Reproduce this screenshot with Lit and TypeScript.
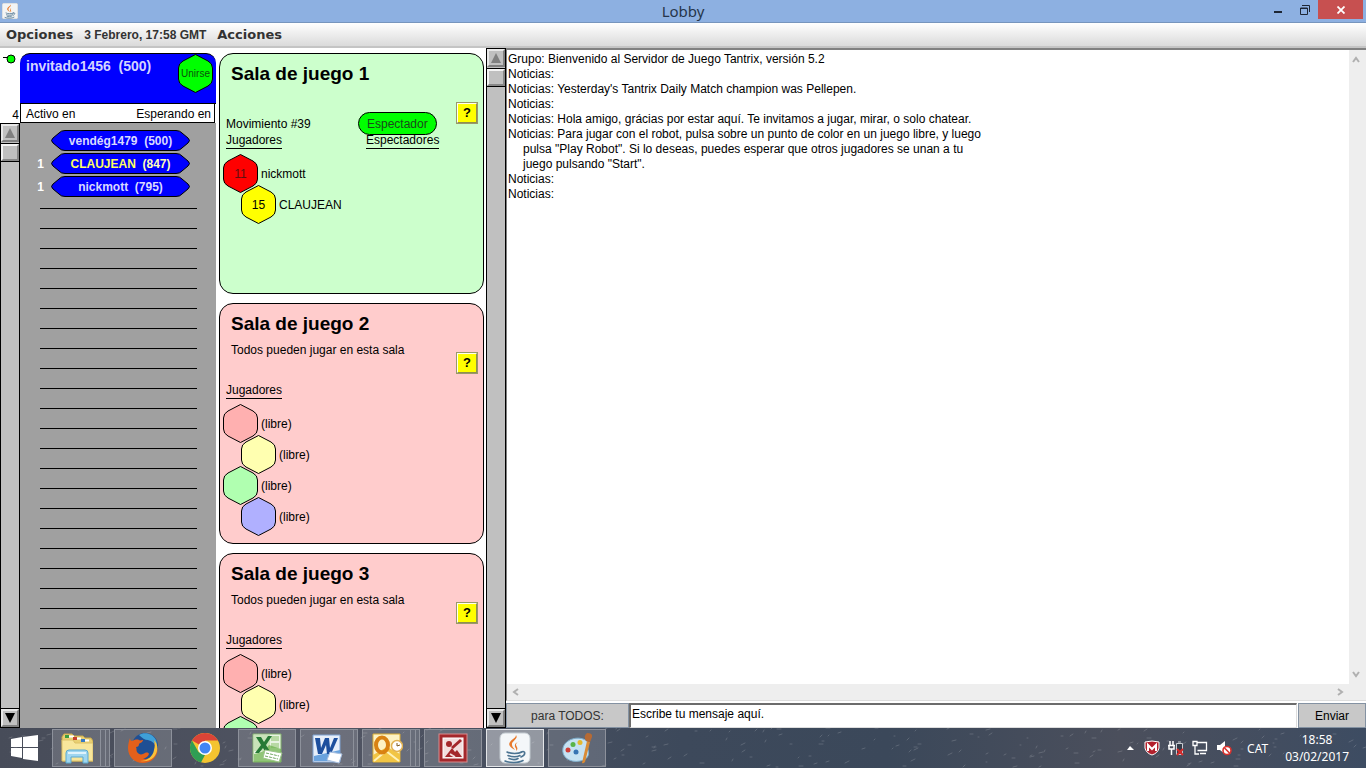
import { LitElement, html, css, svg, nothing } from "lit";
import { customElement } from "lit/decorators.js";
import { classMap } from "lit/directives/class-map.js";

type Seat = { color: string; label: string; score?: string };
type Room = { title: string; note?: string; move?: string; active?: boolean; seats: Seat[] };

const FREE: Seat[] = [
  { color: "#ffb0b0", label: "(libre)" },
  { color: "#ffffb0", label: "(libre)" },
  { color: "#b0ffb0", label: "(libre)" },
  { color: "#b0b0ff", label: "(libre)" },
];

const ROOMS: Room[] = [
  {
    title: "Sala de juego 1",
    move: "Movimiento #39",
    active: true,
    seats: [
      { color: "#ff0000", label: "nickmott", score: "11" },
      { color: "#ffff00", label: "CLAUJEAN", score: "15" },
    ],
  },
  { title: "Sala de juego 2", note: "Todos pueden jugar en esta sala", seats: FREE },
  {
    title: "Sala de juego 3",
    note: "Todos pueden jugar en esta sala",
    seats: [FREE[0], FREE[1], { color: "#b0ffb0", label: "" }],
  },
];

const PLAYERS = [
  { room: "", name: "vendég1479", rating: "(500)", friend: false },
  { room: "1", name: "CLAUJEAN", rating: "(847)", friend: true },
  { room: "1", name: "nickmott", rating: "(795)", friend: false },
];

const LOG = [
  ["Grupo: Bienvenido al Servidor de Juego Tantrix, versión 5.2"],
  ["Noticias:"],
  ["Noticias: Yesterday's Tantrix Daily Match champion was Pellepen."],
  ["Noticias:"],
  ["Noticias: Hola amigo, grácias por estar aquí. Te invitamos a jugar, mirar, o solo chatear."],
  [
    "Noticias: Para jugar con el robot, pulsa sobre un punto de color en un juego libre, y luego",
    "pulsa \"Play Robot\". Si lo deseas, puedes esperar que otros jugadores se unan a tu",
    "juego pulsando \"Start\".",
  ],
  ["Noticias:"],
  ["Noticias:"],
];

const hexagon = (fill: string) => html`<svg class="hex-shape" width="35" height="39" viewBox="0 0 35 39" aria-hidden="true">
  <path d="M17.500 .5 L30 7 Q34.500 9.500 34.500 14 V25 Q34.500 29.500 30 32 L17.500 38.500 L5 32 Q.5 29.500 .5 25 V14 Q.5 9.500 5 7 Z" fill=${fill} stroke="#000" />
</svg>`;

const javaCup = svg`
  <path d="M17 3c3 4-5 6-4 10 0 2 2 3 3 5-5-3-7-5-5-8 2-3 6-4 6-7z" fill="#e8792b"/>
  <path d="M21 9c-4 2-5 3-3 6 1 2 0 3-1 4 1-3-2-4-1-6 0-2 3-3 5-4z" fill="#e8792b"/>
  <path d="M8 20c4 2 11 2 15 0M9 23.500c4 1.500 9 1.500 12 0M10 26.500c3 1.200 7 1.200 9 0M6 29c4 2 14 2 18-.5M22 20c5-2 5 3 0 5" fill="none" stroke="#4b7391" stroke-width="1.600" stroke-linecap="round"/>`;

const ICONS = {
  explorer: svg`
    <path d="M1 5l2-3h8l2 2h9l2 2h6l2 3v20H2z" fill="#e9cf72" stroke="#c9a94b"/>
    <path d="M7 3.500h6v2H7zM15 5.500h5v2h-5zM23 7.500h5v2h-5z" fill="#fff"/>
    <path d="M4 3h4v3H4z" fill="#3b9c3f"/><path d="M12 5h4v3h-4z" fill="#c8402e"/><path d="M20 7h4v3h-4z" fill="#3579c4"/>
    <path d="M1 8h11l2 3h18v18H1z" fill="#f8e69b" stroke="#dcc067"/>
    <path d="M5 31V21q0-3 3-3h16q3 0 3 3v10h-5v-6H10v6z" fill="#9fd6f0" stroke="#5ba9d0"/>
    <path d="M7 21h18" stroke="#dff3fc" stroke-width="2"/>`,
  firefox: svg`
    <circle cx="18" cy="14" r="13" fill="#1f4f94"/>
    <path d="M12 3c6-4 14-1 17 5 1 3 1 5 0 7-2-5-5-6-8-7-3 0-6-2-9-5z" fill="#3fa0d8"/>
    <path d="M3 6c0 2 1 3 2 3 2-1 5-2 7-1 1 1 3 0 4 0 0 2-3 3-4 4 0 2-1 3-3 3 1 2 0 3 1 5 2 3 5 3 8 1 2-1 4 0 4 1-1 3-4 4-6 5 6 1 11-3 12-10 1-2 0-4-1-6 3 2 4 6 3 10-2 6-7 10-14 10C8 31 1 25 1 16c0-4 1-7 2-10z" fill="#e4601b"/>
    <path d="M27 8c5 5 4 12 0 17-4 4-9 5-14 4 8 0 13-5 14-11 1-4 1-7 0-10z" fill="#f9c23a"/>`,
  chrome: svg`
    <circle cx="16" cy="16" r="15" fill="#f4c430"/>
    <path d="M16 16L3 8.500A15 15 0 0 1 29 8.500H16z" fill="#dc4437"/>
    <path d="M3 8.500L9.500 20 16 23l-4 7.500A15 15 0 0 1 3 8.500z" fill="#2f9e54"/>
    <circle cx="16" cy="16" r="7" fill="#fff"/><circle cx="16" cy="16" r="5.500" fill="#4285f4"/>`,
  excel: svg`
    <path d="M2 2h28v28H2z" fill="#e8f3e2" stroke="#83b36c"/>
    <path d="M3 3h16v16H3z" fill="#c9e3b9"/><path d="M20 4h8v5h-8zM20 11h8v5h-8z" fill="#b8d9a4"/>
    <path d="M3 22c10-2 10-3 15-9l12 4v13H3z" fill="#6bb04a" opacity=".7"/>
    <path d="M5 5h5l3 5 4-6h4l-6 9 5 8h-5l-3-5-4 5H4l6-8z" fill="#267a36"/>
    <path d="M14 18l17 3-3 9-16-4z" fill="#fff" stroke="#9cc48a"/><path d="M15 21l13 3M14 24l13 3" stroke="#72a862" stroke-dasharray="3 1"/>`,
  word: svg`
    <path d="M2 3h27v27H2z" fill="#e7effa" stroke="#7fa3d3"/><path d="M3 24l26-6v11H3z" fill="#6aa3de"/>
    <path d="M4 6h5l1 10 4-10h4l1 10 4-10h4l-7 16h-4l-1-9-4 9H7z" fill="#1d4f9e"/>
    <path d="M19 20l12 2-3 9-12-3z" fill="#fff" stroke="#a8bfdf"/>`,
  outlook: svg`
    <path d="M2 2h27v28H2z" fill="#fdf2c4" stroke="#dcae35"/><path d="M2 23l14-8 13 7v8H2z" fill="#f2c544"/>
    <path d="M3 29l12-10 13 10" fill="none" stroke="#fff2b8" stroke-width="2"/>
    <ellipse cx="11" cy="13" rx="6" ry="7.500" fill="none" stroke="#d98212" stroke-width="4"/>
    <circle cx="26" cy="14" r="5.500" fill="#fff" stroke="#e2b252" stroke-width="1.500"/><path d="M26 11v3l3-1" fill="none" stroke="#805b1c"/>`,
  viewer: svg`
    <rect x="2" y="2" width="28" height="28" fill="#a4272b" stroke="#d98b8d"/>
    <rect x="6" y="6" width="20" height="20" fill="#f3dede" stroke="#fff"/>
    <path d="M15 16l9-8" stroke="#a4272b" stroke-width="3"/><circle cx="12" cy="12" r="3" fill="#a4272b"/><path d="M8 25l7-9 3 4 2-2 5 7z" fill="#a4272b"/><path d="M13 22l5 3" stroke="#f3dede" stroke-width="2"/>`,
  java: svg`<rect x="1" y="1" width="30" height="30" rx="5" fill="#f4f7f9" stroke="#c4ccd2"/>${javaCup}`,
  paint: svg`
    <path d="M2 16C4 7 18 3 26 9c3 3 0 6 1 9 2 5-1 10-8 11C9 31 0 25 2 16z" fill="#c6e2f2" stroke="#7fb1d0"/>
    <circle cx="7" cy="18" r="2.500" fill="#cf3f38"/><circle cx="12" cy="12.500" r="2.500" fill="#59b447"/><circle cx="19" cy="10.500" r="2.500" fill="#e3b930"/><circle cx="15" cy="20" r="2.500" fill="#3674b3"/>
    <path d="M21 31L26 9l3 1-5 20q-2 2-3 1z" fill="#d98b35"/><path d="M25 9q-3-5 1-8 6 0 5 4-1 3-2 5z" fill="#b56a35"/>`,
};

const TASKS: { id: keyof typeof ICONS; name: string; kind: string }[] = [
  { id: "explorer", name: "Explorador", kind: "stack two" },
  { id: "firefox", name: "Firefox", kind: "" },
  { id: "chrome", name: "Chrome", kind: "idle" },
  { id: "excel", name: "Excel", kind: "" },
  { id: "word", name: "Word", kind: "stack" },
  { id: "outlook", name: "Outlook", kind: "stack two" },
  { id: "viewer", name: "Visor", kind: "" },
  { id: "java", name: "Java", kind: "current" },
  { id: "paint", name: "Paint", kind: "" },
];

const specks = Array.from({ length: 240 }, (_, i) => {
  const x = (i * 379 + ((i * i * 17) % 211)) % 1366;
  const y = (i * 23 + ((i * i * 7) % 31)) % 40;
  return `M${x} ${y}l${(i % 4) + 1} ${-((i * 5) % 3)}`;
}).join("");

const base = css`
  * { box-sizing: border-box; }
  button { font: inherit; color: inherit; background: none; border: 0; padding: 0; margin: 0; }
  svg { display: block; }
`;

@customElement("awt-scrollbar")
export class AwtScrollbar extends LitElement {
  static styles = [base, css`
    :host { box-sizing: border-box; display: flex; flex-direction: column; width: 20px; background: #c0c0c0; border: 1px solid #000; }
    .arrow, .thumb { display: grid; place-items: center; flex: none; background: #c0c0c0; border: 2px solid; border-color: #e8e8e8 #808080 #808080 #e8e8e8; }
    .arrow { height: 18px; }
    .thumb { height: 17px; margin-top: 2px; outline: 1px solid #000; border-color: #f4f4f4 #888 #888 #f4f4f4; }
    .track { flex: 1; border-bottom: 1px solid #000; }
  `];
  render() {
    return html`
      <button class="arrow" aria-label="Subir"><svg width="10" height="10"><path d="M5 0l5 10H0z" fill="#808080" /></svg></button>
      <div class="thumb"></div>
      <div class="track"></div>
      <button class="arrow" aria-label="Bajar"><svg width="10" height="10"><path d="M0 0h10L5 10z" fill="#000" /></svg></button>`;
  }
}

@customElement("game-room")
export class GameRoom extends LitElement {
  static properties = { room: { attribute: false } };
  declare room: Room;
  static styles = [base, css`
    :host { display: block; flex: none; }
    .card { height: 241px; border: 1px solid #000; border-radius: 14px; background: #ffcccc; padding: 10px 5px 0 3px; }
    .card.active { background: #ccffcc; }
    .title { margin: 0 0 0 8px; font-size: 19px; line-height: 20px; font-weight: bold; }
    .info { display: grid; grid-template-columns: 1fr 22px; }
    .fields { display: grid; grid-template-columns: 140px 1fr; grid-template-rows: 31px 18px 16px; align-items: center; margin-left: 3px; line-height: 14px; }
    .note { grid-column: 1 / -1; margin-left: 5px; }
    .under { justify-self: start; border-bottom: 1px solid #000; line-height: 15px; grid-row: 3; }
    .watch { justify-self: start; height: 23px; margin: -3px 0 -2px -8px; padding: 0 8px; border: 1px solid #000; border-radius: 12px; background: #00ff00; color: #1b4a1b; }
    .help { width: 22px; height: 22px; margin-top: 18px; background: #ffff00; border: 2px solid; border-color: #fffff0 #908f50 #908f50 #fffff0; outline: 1px solid #99996a; outline-offset: -1px; font-weight: bold; font-size: 13px; line-height: 16px; }
    .seats { list-style: none; margin: 5px 0 0; padding: 0; }
    .seat { display: flex; align-items: flex-start; height: 31px; gap: 3px; }
    .seat:nth-child(even) { padding-left: 18px; }
    .hex { display: grid; place-items: center; width: 35px; height: 39px; }
    .hex > * { grid-area: 1 / 1; }
    .name { line-height: 40px; }
    .dim { color: #5c1010; }
  `];
  render() {
    const r = this.room;
    return html`<section class=${classMap({ card: true, active: !!r.active })}>
      <h2 class="title">${r.title}</h2>
      <div class="info">
        <div class="fields">
          <div class="note">${r.note ?? nothing}</div>
          ${r.move ? html`<div>${r.move}</div><button class="watch">Espectador</button>` : nothing}
          <div class="under">Jugadores</div>
          ${r.move ? html`<div class="under">Espectadores</div>` : nothing}
        </div>
        <button class="help" aria-label="Ayuda">?</button>
      </div>
      <ul class="seats">
        ${r.seats.map((s) => html`<li class="seat">
          <button class="hex" aria-label="Sentarse">${hexagon(s.color)}${s.score ? html`<span class=${classMap({ dim: s.score === "11" })}>${s.score}</span>` : nothing}</button>
          ${s.label ? html`<span class="name">${s.label}</span>` : nothing}
        </li>`)}
      </ul>
    </section>`;
  }
}

@customElement("app-root")
export class AppRoot extends LitElement {
  static styles = [base, css`
    :host { box-sizing: border-box; display: flex; flex-direction: column; height: 100vh; padding-bottom: 4px; background: #fff; color: #000; overflow: hidden; font: 12px "Liberation Sans", Arial, sans-serif; }
    .titlebar { display: grid; grid-template-columns: 1fr auto 1fr; align-items: start; flex: none; height: 23px; background: #8db0e1; border-bottom: 1px solid #7795bd; }
    .app-icon { margin: 3px 0 0 2px; }
    .caption { margin: 0; font: 15px/23px "Noto Sans", sans-serif; color: #26354a; }
    .window-buttons { display: flex; justify-content: flex-end; padding-right: 3px; }
    .win { display: grid; place-items: center; width: 27px; height: 19px; }
    .win.close { width: 45px; background: #c75050; }
    .menubar { display: flex; align-items: center; flex: none; height: 25px; padding: 0 6px; gap: 11px; background: linear-gradient(#fff, #dadada); border-bottom: 2px solid #c4c4c4; color: #333; font-weight: bold; }
    .menu { font: bold 13px "DejaVu Sans", sans-serif; }
    .main { display: grid; grid-template-columns: 20px 196px 270px 20px 1fr; flex: 1; min-height: 0; }
    .rail { display: flex; flex-direction: column; min-height: 0; }
    .status { height: 75px; display: flex; flex-direction: column; justify-content: space-between; align-items: flex-end; flex: none; padding: 6px 1px 1px 0; }
    .dot { margin-right: 3px; }
    .rail awt-scrollbar { flex: 1; }
    .people { display: flex; flex-direction: column; min-height: 0; padding-top: 5px; }
    .me { display: flex; justify-content: space-between; flex: none; height: 51px; padding: 0 3px 0 6px; background: #0000ff; border: 1px solid #000; border-width: 1px 0; border-radius: 10px 10px 0 0; color: #d4d4ff; }
    .me-name { font-size: 14px; line-height: 25px; font-weight: bold; white-space: pre; }
    .join { display: grid; place-items: center; width: 35px; height: 39px; font-size: 10px; color: #0b510b; }
    .join > * { grid-area: 1 / 1; }
    .heads { display: flex; justify-content: space-between; align-items: flex-end; flex: none; height: 19px; margin-right: 1px; padding: 0 3px 0 5px; border: 1px solid #000; border-top: 0; line-height: 15px; }
    .list { flex: 1; min-height: 0; overflow: hidden; background: #a0a0a0; padding-top: 6px; }
    .player { display: grid; grid-template-columns: 24px 139px; justify-content: start; gap: 7px; align-items: center; height: 23px; color: #fff; font-weight: bold; }
    .at { text-align: right; }
    .pill { display: grid; place-items: center; height: 21px; color: #d9d9ff; white-space: pre; }
    .pill > * { grid-area: 1 / 1; }
    .pill.friend { color: #ffff60; }
    .pill.friend .rating { color: #ffffb8; }
    .empty { height: 20px; margin: 0 19px 0 20px; border-bottom: 1px solid #000; }
    .empty.first { height: 11px; }
    .rooms { display: flex; flex-direction: column; gap: 9px; padding: 5px 2px 0 3px; min-height: 0; overflow: hidden; }
    .chat { display: flex; flex-direction: column; min-width: 0; min-height: 0; background: #eee; }
    .log-frame { display: grid; grid-template-columns: 1fr 17px; grid-template-rows: 1fr 16px; flex: 1; min-height: 0; border: 1px solid #808080; border-width: 2px 0 1px 1px; border-bottom-color: #ddd; }
    .log { background: #fff; padding: 2px 1px; line-height: 15px; overflow: hidden; }
    .entry { margin: 0; }
    .cont { padding-left: 15px; }
    .vbar { display: flex; flex-direction: column; justify-content: space-between; align-items: center; padding: 6px 3px 6px 0; }
    .hbar { display: flex; justify-content: space-between; align-items: center; padding: 0 5px; }
    .send-row { display: grid; grid-template-columns: 123px 1fr 68px; flex: none; height: 27px; padding-top: 2px; background: #fff; }
    .flat { background: #c8c8c8; border: 1px solid #8492a2; color: #333; }
    .message { min-width: 0; margin-right: 1px; padding: 0 1px 4px; border: 1px solid #ddd; border-width: 2px 1px 1px 2px; border-color: #6c6c6c #ddd #ddd #6c6c6c; border-radius: 0; font: inherit; color: #000; background: #fff; outline: 0; }
    .send { color: #000; }
    .taskbar { display: grid; grid-template-columns: 1fr; flex: none; height: 40px; background: linear-gradient(90deg, #474c59, #505462 25%, #3d495b 50%, #3b485a 65%, #4b4f5c 82%, #3d4c62); overflow: hidden; }
    .taskbar > * { grid-area: 1 / 1; }
    .specks { width: 100%; height: 40px; opacity: .16; }
    .bar-content { display: flex; align-items: stretch; position: relative; }
    .start { width: 48px; display: grid; place-items: center; margin-right: 4px; }
    .tasks { display: flex; gap: 4px; padding: 1px 0; }
    .task { position: relative; display: grid; place-items: center; width: 58px; border: 1px solid #8d919b; background: rgba(255, 255, 255, .16); }
    .task.idle { border-color: transparent; background: none; }
    .task.current { border-color: #e3e5e8; background: rgba(255, 255, 255, .42); }
    .task.stack { padding-right: 4px; }
    .task.stack::after { content: ""; position: absolute; top: -1px; bottom: -1px; right: 3px; border-left: 1px solid #8d919b; }
    .task.two { padding-right: 8px; }
    .task.two::after { width: 4px; border-right: 1px solid #8d919b; }
    .tray { display: flex; align-items: center; margin-left: auto; color: #fff; font: 12px/17px "Noto Sans", sans-serif; padding-right: 17px; }
    .tray-icons { display: flex; align-items: center; gap: 8px; margin-right: 15px; }
    .clock { text-align: center; margin-left: 17px; }
  `];

  chevron(d: string) {
    return html`<svg width="8" height="8" viewBox="0 0 8 8" aria-hidden="true"><path d=${d} fill="none" stroke="#b0b0b0" stroke-width="2" /></svg>`;
  }

  render() {
    return html`
      <header class="titlebar">
        <svg class="app-icon" width="16" height="16" viewBox="0 0 32 32" aria-hidden="true"><rect width="32" height="32" rx="3" fill="#f3f4f4" stroke="#9aa5b2" />${javaCup}</svg>
        <h1 class="caption">Lobby</h1>
        <div class="window-buttons">
          <button class="win" aria-label="Minimizar"><svg width="8" height="8"><path d="M0 5h8v2H0z" fill="#1d2634" /></svg></button>
          <button class="win" aria-label="Restaurar"><svg width="10" height="10"><path d="M2 .5H9.500V7M.5 3h7v6.500H.5zM.5 3.500h7" fill="none" stroke="#1d2634" /></svg></button>
          <button class="win close" aria-label="Cerrar"><svg width="8" height="8"><path d="M.5.5l7 7M7.500.5l-7 7" stroke="#fff" stroke-width="1.800" /></svg></button>
        </div>
      </header>
      <nav class="menubar">
        <button class="menu">Opciones</button><span>3 Febrero, 17:58 GMT</span><button class="menu">Acciones</button>
      </nav>
      <main class="main">
        <div class="rail">
          <div class="status">
            <svg class="dot" width="13" height="10" viewBox="0 0 13 10" aria-hidden="true"><path d="M0 3.500h5" stroke="#000" /><circle cx="8" cy="5" r="4" fill="#00ff00" stroke="#000" /></svg>
            <span>4</span>
          </div>
          <awt-scrollbar></awt-scrollbar>
        </div>
        <div class="people">
          <div class="me">
            <span class="me-name">invitado1456  (500)</span>
            <button class="join">${hexagon("#00ff00")}<span>Unirse</span></button>
          </div>
          <div class="heads"><span>Activo en</span><span>Esperando en</span></div>
          <div class="list">
            ${PLAYERS.map((p) => html`<div class="player">
              <span class="at">${p.room}</span>
              <button class=${classMap({ pill: true, friend: p.friend })}>
                <svg width="139" height="21" viewBox="0 0 139 21" aria-hidden="true"><path d="M14 .5H125Q129 .5 131 3L137 8Q140 10.500 137 13L131 18Q129 20.500 125 20.500H14Q10 20.500 8 18L2 13Q-1 10.500 2 8L8 3Q10 .5 14 .5Z" fill="#0000ff" stroke="#000" /></svg>
                <span>${p.name}  <span class="rating">${p.rating}</span></span>
              </button>
            </div>`)}
            <div class="empty first"></div>
            ${Array.from({ length: 25 }, () => html`<div class="empty"></div>`)}
          </div>
        </div>
        <div class="rooms">${ROOMS.map((r) => html`<game-room .room=${r}></game-room>`)}</div>
        <awt-scrollbar></awt-scrollbar>
        <div class="chat">
          <div class="log-frame">
            <div class="log" role="log">
              ${LOG.map((lines) => html`<p class="entry">${lines.map((l, i) => i > 0 ? html`<br /><span class="cont">${l}</span>` : l)}</p>`)}
            </div>
            <div class="vbar">${this.chevron("M1 6l3-4 3 4")}${this.chevron("M1 2l3 4 3-4")}</div>
            <div class="hbar">${this.chevron("M6 1L2 4l4 3")}${this.chevron("M2 1l4 3-4 3")}</div>
          </div>
          <div class="send-row">
            <button class="flat">para TODOS:</button>
            <input class="message" aria-label="Mensaje" value="Escribe tu mensaje aquí." />
            <button class="flat send">Enviar</button>
          </div>
        </div>
      </main>
      <footer class="taskbar">
        <svg class="specks" viewBox="0 0 1366 40" preserveAspectRatio="xMidYMid slice" aria-hidden="true"><path d=${specks} stroke="#fff" stroke-linecap="round" /></svg>
        <div class="bar-content">
          <button class="start" aria-label="Inicio"><svg width="27" height="26" viewBox="0 0 27 26"><path d="M0 4l11-2v10H0zM12 2l15-2v12H12zM0 13h11v10L0 21zM12 13h15v13l-15-2z" fill="#fff" /></svg></button>
          <div class="tasks">
            ${TASKS.map((t) => html`<button class="task ${t.kind}" aria-label=${t.name}><svg width="32" height="32" viewBox="0 0 32 32">${ICONS[t.id]}</svg></button>`)}
          </div>
          <div class="tray">
            <div class="tray-icons">
              <svg width="12" height="16"><path d="M3 10l3-4 4 4z" fill="#fff" /></svg>
              <svg width="16" height="16"><path d="M1 2q7-2 14 0v6q-1 5-7 7-6-2-7-7z" fill="#b3202c" stroke="#fff" /><path d="M4 11V5l4 4 4-4v6" fill="none" stroke="#fff" stroke-width="2" /></svg>
              <svg width="16" height="16"><path d="M2 1v4M5 1v4M0 5.500h7M1 6v3h5V6M3.500 9v6" fill="none" stroke="#fff" stroke-width="1.500" /><path d="M8.500 3.500h6v11h-6zM10 2h3" fill="#333b48" stroke="#c8ccd2" /><path d="M9 9l6 6M15 9l-6 6" stroke="#d92a2a" stroke-width="2" /></svg>
              <svg width="16" height="16"><path d="M5.500 2.500h9v8h-9M8 13.500h6M1 1.500h4v4H1zM3 6v8h4" fill="none" stroke="#fff" stroke-width="1.300" /></svg>
              <svg width="16" height="16"><path d="M1 5h3l5-4v13l-5-4H1z" fill="#fff" /><circle cx="11" cy="10.500" r="4" fill="#fff" stroke="#d9302c" stroke-width="1.600" /><path d="M8.500 8l5 5" stroke="#d9302c" stroke-width="1.600" /></svg>
            </div>
            <span>CAT</span>
            <div class="clock"><div>18:58</div><div>03/02/2017</div></div>
          </div>
        </div>
      </footer>`;
  }
}
